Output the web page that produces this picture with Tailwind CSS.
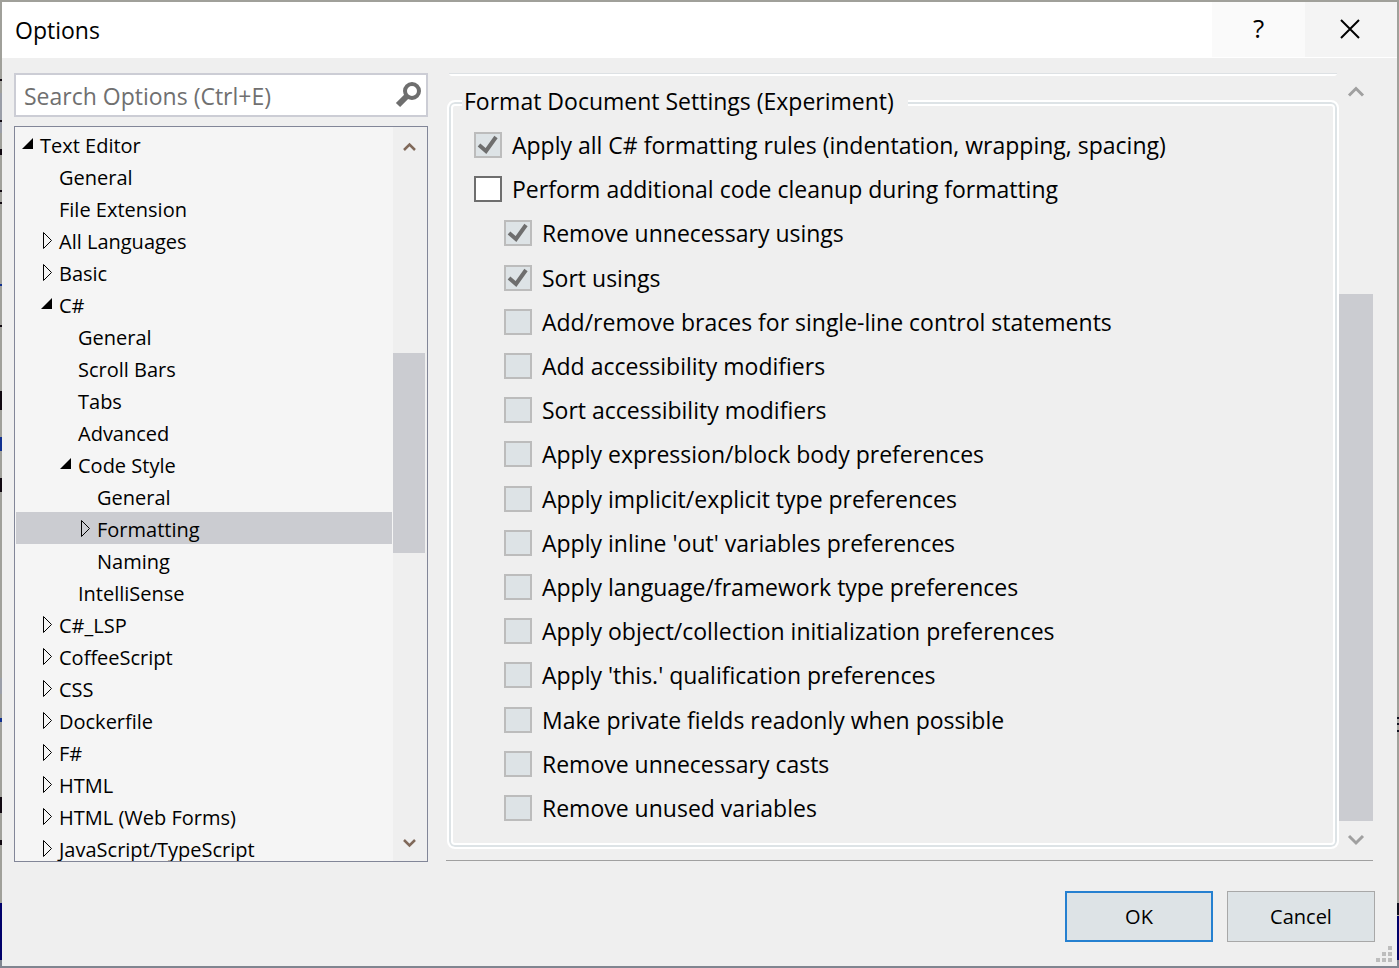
<!DOCTYPE html>
<html lang="en">
  <head>
    <meta charset="UTF-8" />
    <meta name="viewport" content="width=device-width, initial-scale=1.0" />
    <title>Options</title>
    <script src="https://cdn.jsdelivr.net/npm/@tailwindcss/browser@4"></script>
  </head>
  <body class="h-screen flex overflow-hidden bg-[#a0a09a] font-['Open_Sans','Noto_Sans',sans-serif] text-black">
    <!-- desktop showing through at the window edge -->
    <svg class="w-[2px] h-full shrink-0" viewBox="0 0 2 968" preserveAspectRatio="none" shape-rendering="crispEdges">
      <path fill="#a0a09a" d="M0 0h2v968H0z" />
      <path fill="#9a9ea8" d="M0 93h2v40H0zM0 678h2v16H0z" />
      <path fill="#100810" d="M0 79h2v2H0zM0 120h2v2H0zM0 149h2v6H0zM0 190h2v2H0zM0 202h2v2H0zM0 325h2v2H0zM0 391h2v19H0zM0 478h2v14H0zM0 797h2v16H0zM0 840h2v5H0z" />
      <path fill="#103090" d="M0 284h2v2H0zM0 437h2v14H0zM0 718h2v4H0z" />
      <path fill="#00006a" d="M0 903h2v57H0z" />
      <path fill="#808590" d="M0 960h2v8H0z" />
    </svg>

    <main class="flex-1 min-w-0 flex flex-col bg-[#efefef] border-t-2 border-t-[#a0a09a] border-b-2 border-b-[#808590]">
      <header class="h-14 shrink-0 flex items-stretch bg-white border-b border-white">
        <h1 class="flex-1 flex items-center pl-[13px] pt-[2px] text-[23px]">Options</h1>
        <button aria-label="Help" class="w-[93px] bg-[#fafafa] pb-[2px] text-[26px] font-medium">?</button>
        <button aria-label="Close" class="w-[92px] flex items-center justify-center bg-[#f4f4f4] pr-[2px] pb-[2px]">
          <svg class="w-5 h-5" viewBox="0 0 20 20" fill="none" stroke="#000" stroke-width="2">
            <path d="M1 1 19 19M19 1 1 19" />
          </svg>
        </button>
      </header>

      <div class="flex-1 min-h-0 flex pl-3 pr-6 gap-[18px]">
        <section class="w-[414px] shrink-0 flex flex-col gap-[9px] pt-[15px]">
          <label class="h-11 shrink-0 flex items-center bg-white border-2 border-[#cccdd5] pl-2 pr-1">
            <input
              type="text"
              aria-label="Search Options"
              placeholder="Search Options (Ctrl+E)"
              class="flex-1 min-w-0 pt-[2px] text-[23px] placeholder:text-[#707070] focus:outline-none"
            />
            <svg class="w-7 h-7" viewBox="0 0 28 28" fill="none" stroke="#6e6e6e">
              <circle cx="18" cy="10" r="7" stroke-width="4" />
              <path d="M13 15 4 24" stroke-width="6" />
            </svg>
          </label>

          <div class="flex-1 min-h-0 flex border border-[#828698] bg-[#f5f5f5]">
            <ul id="tree" class="flex-1 min-w-0 overflow-hidden pt-px pl-px"></ul>
            <div class="w-[34px] shrink-0 ml-px pr-[2px] flex flex-col items-center bg-[#efefef]">
              <svg class="w-8 h-10 shrink-0" viewBox="0 0 32 40" fill="none" stroke="#80695a" stroke-width="2.5">
                <path d="M11 23 16.500 17.500 22 23" />
              </svg>
              <div class="grow-[186]"></div>
              <div class="w-full grow-[200] bg-[#cbccd1]"></div>
              <div class="grow-[268]"></div>
              <svg class="w-8 h-10 shrink-0" viewBox="0 0 32 40" fill="none" stroke="#80695a" stroke-width="2.5">
                <path d="M11 19 16.500 24.500 22 19" />
              </svg>
            </div>
          </div>
        </section>

        <section class="flex-1 min-w-0 flex flex-col border-b border-[#a0a0a0] pt-[15px] mb-px">
          <div class="flex-1 min-h-0 flex">
            <div class="flex-1 min-w-0 flex flex-col pl-px pb-[11px]">
              <div class="h-[3px] shrink-0 mx-[2px] mb-[10px] border-t border-t-[#dde1e4] border-b-2 border-b-white rounded-b-sm"></div>
              <fieldset class="flex-1 min-h-0 flex flex-col pt-[7px] pb-[17px] pl-[25px] border-2 border-white rounded-lg shadow-[inset_0_0_0_2px_#dde3e6,inset_0_0_0_4px_#ffffff]">
                <legend class="-ml-3 pl-[2px] pr-[14px] bg-[#efefef] text-[23px] leading-[30px]">Format Document Settings (Experiment)</legend>
                <div id="settings" class="flex-1 grid auto-rows-fr"></div>
              </fieldset>
            </div>
            <div class="w-[34px] shrink-0 flex flex-col items-center">
              <svg class="w-8 h-9 shrink-0" viewBox="0 0 32 36" fill="none" stroke="#a0a0a0" stroke-width="3">
                <path d="M9 22.500 16 15.500 23 22.500" />
              </svg>
              <div class="grow-[185]"></div>
              <div class="w-full grow-[527] bg-[#cbccd1]"></div>
              <svg class="w-8 h-[39px] shrink-0" viewBox="0 0 32 39" fill="none" stroke="#a0a0a0" stroke-width="3">
                <path d="M9 15 16 22 23 15" />
              </svg>
            </div>
          </div>
        </section>
      </div>

      <footer class="h-[104px] shrink-0 flex">
        <div class="flex-1 flex justify-end gap-[14px] pt-[29px]">
          <button class="w-[148px] h-[51px] bg-[#dde3e6] border-2 border-[#2580d0] text-xl">OK</button>
          <button class="w-[148px] h-[51px] bg-[#dde3e6] border border-[#a8a8a8] text-xl">Cancel</button>
        </div>
        <svg class="w-[22px] h-5 self-end" viewBox="0 0 22 20" fill="#bdbdbd">
          <path d="M13 0h4v4h-4zM7 6h4v4H7zM13 6h4v4h-4zM1 12h4v4H1zM7 12h4v4H7zM13 12h4v4h-4z" />
        </svg>
      </footer>
    </main>

    <svg class="w-[2px] h-full shrink-0" viewBox="0 0 2 968" preserveAspectRatio="none" shape-rendering="crispEdges">
      <path fill="#a0a09a" d="M0 0h2v968H0z" />
      <path fill="#101020" d="M0 717h2v2H0zM0 723h2v2H0zM0 730h2v2H0zM0 903h2v12H0z" />
      <path fill="#00006a" d="M0 916h2v44H0z" />
      <path fill="#808590" d="M0 960h2v8H0z" />
    </svg>

    <script>
      // [depth, label, state]
      const nodes = [
        [0, "Text Editor", "open"],
        [1, "General"],
        [1, "File Extension"],
        [1, "All Languages", "closed"],
        [1, "Basic", "closed"],
        [1, "C#", "open"],
        [2, "General"],
        [2, "Scroll Bars"],
        [2, "Tabs"],
        [2, "Advanced"],
        [2, "Code Style", "open"],
        [3, "General"],
        [3, "Formatting", "closed"],
        [3, "Naming"],
        [2, "IntelliSense"],
        [1, "C#_LSP", "closed"],
        [1, "CoffeeScript", "closed"],
        [1, "CSS", "closed"],
        [1, "Dockerfile", "closed"],
        [1, "F#", "closed"],
        [1, "HTML", "closed"],
        [1, "HTML (Web Forms)", "closed"],
        [1, "JavaScript/TypeScript", "closed"],
      ];

      const arrows = {
        open: '<path d="M12 10v11H1z" fill="#000" />',
        closed: '<path d="M3.500 8.500v16l8-8z" fill="none" stroke="#000" />',
      };

      document.getElementById("tree").innerHTML = nodes
        .map(
          ([depth, label, state]) => `
          <li class="h-8 flex text-xl leading-9 whitespace-nowrap ${label === "Formatting" ? "bg-[#cbccd1]" : ""}"
              style="padding-left: ${5 + depth * 19}px">
            <svg class="w-[19px] h-8 shrink-0" viewBox="0 0 19 32">${arrows[state] || ""}</svg>
            <span>${label}</span>
          </li>`
        )
        .join("");

      // [label, checked, enabled]
      const settings = [
        ["Apply all C# formatting rules (indentation, wrapping, spacing)", true, false],
        ["Perform additional code cleanup during formatting", false, true],
        ["Remove unnecessary usings", true, false],
        ["Sort usings", true, false],
        ["Add/remove braces for single-line control statements", false, false],
        ["Add accessibility modifiers", false, false],
        ["Sort accessibility modifiers", false, false],
        ["Apply expression/block body preferences", false, false],
        ["Apply implicit/explicit type preferences", false, false],
        ["Apply inline 'out' variables preferences", false, false],
        ["Apply language/framework type preferences", false, false],
        ["Apply object/collection initialization preferences", false, false],
        ["Apply 'this.' qualification preferences", false, false],
        ["Make private fields readonly when possible", false, false],
        ["Remove unnecessary casts", false, false],
        ["Remove unused variables", false, false],
      ];

      document.getElementById("settings").innerHTML = settings
        .map(
          ([label, checked, enabled], i) => `
          <label class="flex items-center gap-[10px] whitespace-nowrap text-[23px] leading-7 ${i > 1 ? "ml-[30px]" : ""}">
            <span class="grid shrink-0">
              <input type="checkbox" ${checked ? "checked" : ""} ${enabled ? "" : "disabled"}
                class="peer col-start-1 row-start-1 appearance-none w-7 h-[26px] border-2 border-[#6e6e6e] bg-white disabled:border-[#bcbcbc] disabled:bg-[#dde3e6]" />
              <svg class="hidden peer-checked:block col-start-1 row-start-1 w-7 h-[26px]" viewBox="0 0 28 26" fill="none" stroke="#6e6e6e" stroke-width="4">
                <path d="M5 13 12 19 22 5" />
              </svg>
            </span>
            ${label}
          </label>`
        )
        .join("");
    </script>
  </body>
</html>
